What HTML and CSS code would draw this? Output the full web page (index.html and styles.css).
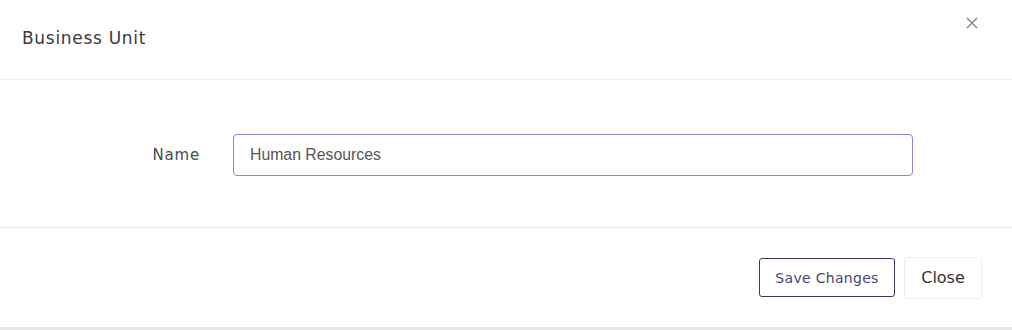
FILE: index.html
```html
<!DOCTYPE html>
<html>
<head>
<meta charset="utf-8">
<link rel="stylesheet" href="styles.css">
</head>
<body>
<div class="modal">
  <div class="modal-header">
    <h5 class="modal-title">Business Unit</h5>
    <button class="btn-x" type="button" aria-label="Close">
      <svg width="12" height="12" viewBox="0 0 12 12"><path d="M1 1L11 11M11 1L1 11" stroke="#8a8a8a" stroke-width="1.5" fill="none"/></svg>
    </button>
  </div>
  <div class="modal-body">
    <div class="form-row">
      <label class="form-label">Name</label>
      <input class="form-input" type="text" value="Human Resources">
    </div>
  </div>
  <div class="modal-footer">
    <button class="btn btn-save" type="button">Save Changes</button>
    <button class="btn btn-close" type="button">Close</button>
  </div>
</div>
</body>
</html>
```
FILE: styles.css
```css
html, body {
  margin: 0;
  padding: 0;
  background: #e6e6e6;
  font-family: "DejaVu Sans", "Inter", sans-serif;
}
.modal {
  background: #fff;
  width: 1012px;
  height: 327px;
  display: flex;
  flex-direction: column;
}
.modal-header {
  height: 80px;
  border-bottom: 1px solid #ededed;
  display: flex;
  align-items: flex-start;
  justify-content: space-between;
  padding: 0 33px 0 22px;
  box-sizing: border-box;
}
.modal-title {
  margin: 27px 0 0;
  font-size: 17px;
  letter-spacing: 0.7px;
  font-weight: 400;
  color: #3a3a3a;
  line-height: 22px;
}
.btn-x {
  margin-top: 16px;
  border: 0;
  background: none;
  padding: 0;
  width: 14px;
  height: 14px;
  display: flex;
  align-items: center;
  justify-content: center;
}
.modal-body {
  height: 148px;
  border-bottom: 1px solid #e8eaea;
  box-sizing: border-box;
  display: flex;
  align-items: center;
  padding-top: 3px;
}
.form-row {
  display: flex;
  align-items: center;
  gap: 33px;
}
.form-label {
  width: 200px;
  text-align: right;
  font-size: 15px;
  letter-spacing: 0.8px;
  color: #4a4a4a;
}
.form-input {
  width: 680px;
  height: 42px;
  box-sizing: border-box;
  border: 1px solid #8c86d8;
  border-radius: 4px;
  padding: 0 16px;
  font-family: "Liberation Sans", Arial, sans-serif;
  font-size: 15.8px;
  color: #555;
  outline: none;
}
.modal-footer {
  flex: 1;
  display: flex;
  align-items: center;
  justify-content: flex-end;
  gap: 9px;
  padding-right: 30px;
}
.btn {
  font-family: "DejaVu Sans", "Inter", sans-serif;
  background: #fff;
  cursor: pointer;
  padding: 0;
}
.btn-save {
  width: 136px;
  height: 39px;
  border: 1px solid #3d3862;
  border-radius: 3px;
  font-size: 14px;
  letter-spacing: 0.3px;
  color: #4b4670;
}
.btn-close {
  width: 78px;
  height: 42px;
  border: 1px solid #ececec;
  border-radius: 3px;
  font-size: 16px;
  color: #333;
}
```
